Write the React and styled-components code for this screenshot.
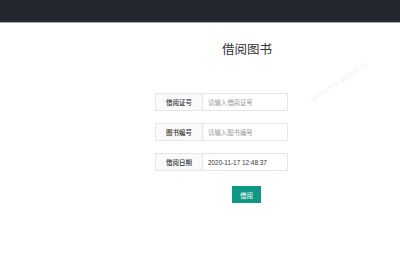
import React from "react";
import styled, { createGlobalStyle } from "styled-components";

const Global = createGlobalStyle`
  html, body { margin: 0; padding: 0; background: #fff; }
  body { font-family: "Liberation Sans", "Noto Sans CJK SC", sans-serif; color: #333; }
  * { box-sizing: border-box; }
`;

const Page = styled.div`
  position: relative;
  width: 400px;
  height: 280px;
  overflow: hidden;
  background: #fff;
`;

const Header = styled.header`
  position: relative;
  z-index: 2;
  height: 23px;
  background: #23262e;
  border-bottom: 1px solid #a9abaf;
`;

const Main = styled.main`
  display: flex;
  flex-direction: column;
  padding-left: 155px;
`;

const Title = styled.h1`
  margin: 19px 0 0 67px;
  height: 14px;
  line-height: 14px;
  font-size: 12.5px;
  font-weight: normal;
  color: #333;
  font-family: "Noto Sans CJK SC", sans-serif;
`;

const Form = styled.form`
  display: flex;
  flex-direction: column;
  gap: 12px;
  margin-top: 37px;
  width: 133px;
`;

const Row = styled.div`
  display: flex;
  height: 18px;
`;

const Label = styled.label`
  width: 48px;
  flex: none;
  display: flex;
  align-items: center;
  justify-content: center;
  background: #fafafa;
  border: 1px solid #e6e6e6;
  font-size: 6.5px;
  font-weight: 500;
  color: #333;
  font-family: "Noto Sans CJK SC", sans-serif;
`;

const Field = styled.div`
  flex: 1;
  display: flex;
  align-items: center;
  padding-left: 5px;
  border: 1px solid #e6e6e6;
  border-left: none;
  font-size: 6.4px;
  color: ${(p) => (p.$placeholder ? "#9a9a9a" : "#333")};
  font-family: "Liberation Sans", "Noto Sans CJK SC", sans-serif;
`;

const Button = styled.button`
  margin: 15px 0 0 77px;
  width: 29px;
  height: 17px;
  padding: 0;
  border: none;
  background: #0f9684;
  color: #fff;
  font-size: 6.5px;
  font-family: "Noto Sans CJK SC", sans-serif;
`;

const Watermark = styled.div`
  position: absolute;
  z-index: 1;
  left: ${(p) => p.$x}px;
  top: ${(p) => p.$y}px;
  font-size: 8.5px;
  color: rgba(0, 0, 0, 0.09);
  transform: rotate(-33deg);
  white-space: nowrap;
  pointer-events: none;
`;

export default function App() {
  return (
    <Page>
      <Global />
      <Header />
      <Watermark $x={306} $y={76}>javayms.github.io</Watermark>
      <Main>
        <Title>借阅图书</Title>
        <Form>
          <Row>
            <Label>借阅证号</Label>
            <Field $placeholder>请输入借阅证号</Field>
          </Row>
          <Row>
            <Label>图书编号</Label>
            <Field $placeholder>请输入图书编号</Field>
          </Row>
          <Row>
            <Label>借阅日期</Label>
            <Field>2020-11-17 12:48:37</Field>
          </Row>
        </Form>
        <Button type="button">借阅</Button>
      </Main>
    </Page>
  );
}
